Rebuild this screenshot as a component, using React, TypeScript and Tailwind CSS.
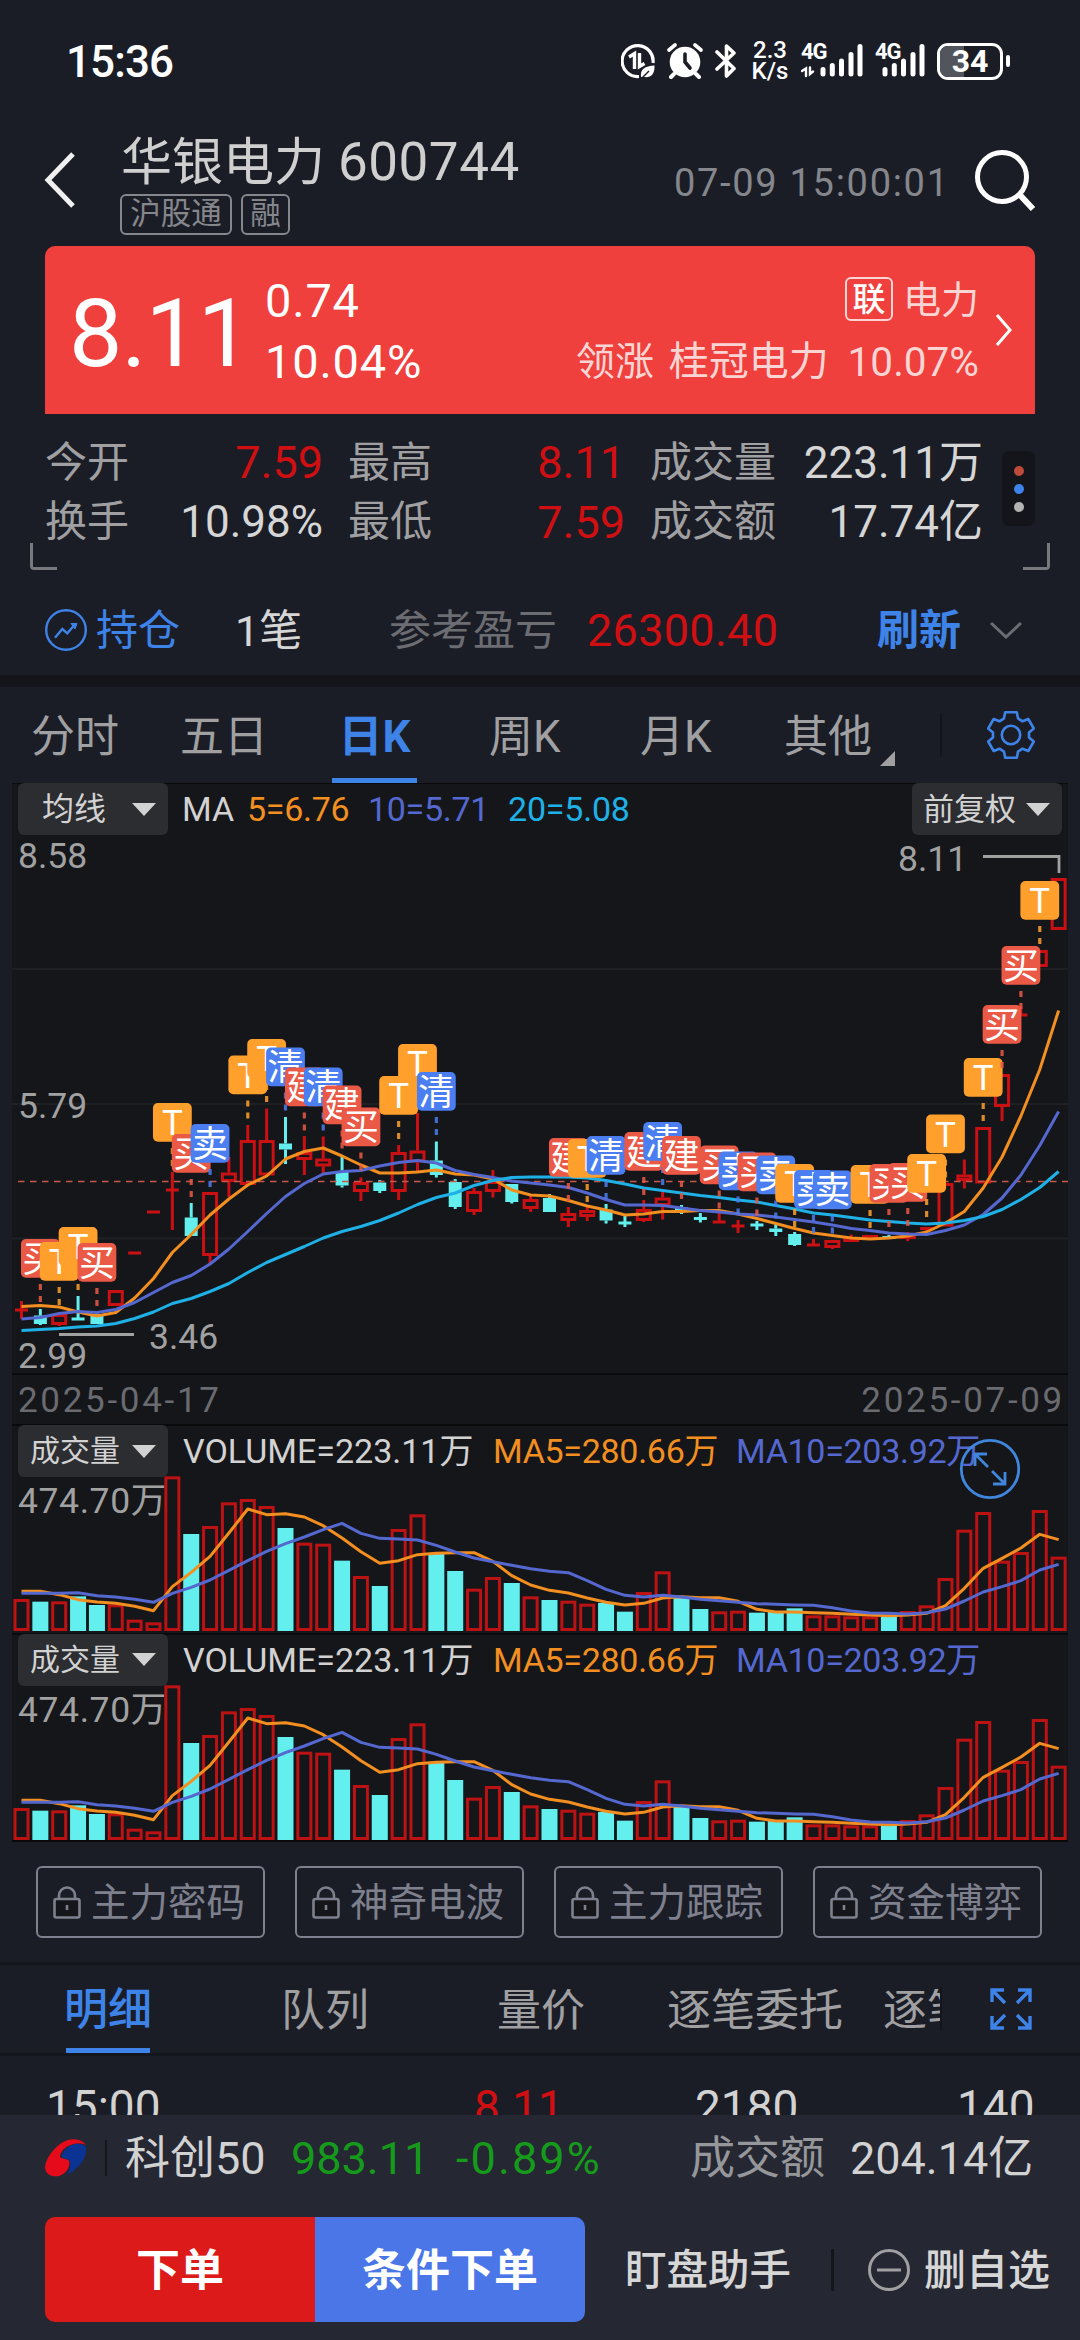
import React from 'react';
import { clsx } from 'clsx';

type Tone = 'up' | 'down';
// [high, bodyTop, bodyBottom, low, tone] in chart pixels
type Candle = [number, number, number, number, Tone];

const candles: Candle[] = [
  [467, 476, 476, 485, 'up'], [475, 481.5, 490, 491, 'down'], [480, 480, 491, 492, 'up'],
  [462, 485, 485, 486, 'down'], [479, 480.5, 490, 490, 'down'], [456, 456, 472, 472, 'up'],
  [419, 419, 419, 419, 'up'], [378, 378, 378, 378, 'up'], [338, 356, 356, 396, 'up'],
  [369, 383.5, 402, 402, 'down'], [358, 358, 422, 431, 'up'], [323, 338.5, 348, 363, 'up'],
  [291, 306, 351, 351, 'up'], [274.5, 306, 341.5, 341, 'up'], [283, 309.5, 315.5, 330, 'down'],
  [302, 318, 326, 341, 'up'], [302.5, 324.5, 332.5, 340, 'up'], [321, 338, 351.5, 353.5, 'down'],
  [343.5, 348, 358, 367, 'up'], [346, 348.5, 357, 359, 'down'], [311, 318, 358, 366, 'up'],
  [279, 316.5, 328.5, 337, 'up'], [307.5, 326.5, 341, 343.5, 'down'], [345, 348, 373, 375, 'down'],
  [354, 357, 378, 381, 'up'], [336, 347, 358, 363.5, 'up'], [350, 350, 368, 369.5, 'down'],
  [361, 365, 375, 378, 'up'], [360, 364, 378, 378, 'down'], [373, 379, 387, 393, 'up'],
  [372, 376, 383, 387, 'up'], [370, 375.5, 386.5, 389.5, 'down'], [381, 389, 389, 393, 'down'],
  [366, 375, 387, 388, 'up'], [357, 363.5, 372, 385.5, 'up'], [371, 375, 375, 380, 'down'],
  [379, 384.5, 384.5, 388.5, 'down'], [377, 388, 388, 389, 'up'], [386, 392, 392, 399, 'up'],
  [387, 391, 391, 396, 'down'], [390, 394.5, 398, 402, 'down'], [398, 400, 411, 412, 'down'],
  [405, 411, 411, 412, 'up'], [406, 406, 414, 415, 'up'], [400.5, 403, 408, 408, 'up'],
  [401, 401, 405, 405, 'up'], [401, 403.5, 403.5, 405, 'down'], [398, 401, 405, 407, 'up'],
  [393, 394.5, 394.5, 398, 'up'], [349, 349, 392.5, 392, 'up'], [325.5, 340.5, 347, 354.5, 'up'],
  [293, 293, 349.5, 349, 'up'], [240, 240, 273, 287, 'up'], [172, 181, 181, 181, 'up'],
  [116, 116, 133, 133, 'up'], [44, 44, 96, 96, 'up'],
];

const ma5 = [472.5, 471.5, 473, 478, 482, 478.5, 464, 444.5, 418.5, 400.5, 381, 365, 351, 342, 325, 317.5, 314, 322, 331, 339, 339, 338, 336, 340, 341, 345, 356, 361, 362, 366.5, 372, 376, 381, 380, 377.5, 377.5, 376.5, 376.5, 380, 384.5, 389.5, 394.5, 399, 401.5, 404, 405, 404, 402, 398, 389, 377.5, 354, 323, 282, 235.5, 176.5];
const ma10 = [485, 483.5, 479.5, 477.5, 478.5, 475.5, 468.5, 458.5, 448.5, 441.5, 430, 415, 397.5, 379.5, 362.5, 349.5, 340, 337.5, 336.5, 332, 328.5, 326.5, 329, 336.5, 340.5, 343.5, 347, 349, 351, 353.5, 359, 365.5, 371, 371, 371.5, 374, 376.5, 378, 380, 381, 383, 385.5, 388, 391, 394.5, 396.5, 399, 400, 400.5, 396.5, 391, 380.5, 364, 341, 311.5, 277.5];
const ma20 = [496.5, 495.5, 494.5, 493, 492, 489.5, 484.5, 478, 469.5, 464.5, 457.5, 449.5, 438.5, 428.5, 420.5, 412.5, 404, 397.5, 392.5, 386.5, 379, 370.5, 363.5, 359, 351.5, 346.5, 343.5, 343, 343, 343, 344, 346.5, 350, 354, 356.5, 359, 361.5, 363.5, 366, 368, 371.5, 375, 379, 381, 383.5, 386, 387.5, 389, 390, 389, 386.5, 382.5, 375.5, 365.5, 353.5, 337.5];

const volumes = [96, 88, 89, 104, 78, 80, 34, 26, 464, 291, 315, 386, 396, 375, 309, 265, 262, 211, 165, 135, 306, 350, 231, 180, 127, 162, 144, 104, 93, 91, 82, 84, 58, 117, 179, 99, 66, 59, 61, 55, 60, 68, 47, 47, 44, 44, 43, 60, 77, 159, 304, 357, 211, 237, 363, 223];
const volMa5 = [119, 119, 109, 94, 87, 83, 74, 61, 133, 176, 224, 294, 366, 349, 352, 342, 316, 279, 238, 203, 211, 229, 233, 235, 235, 209, 166, 138, 122, 114, 99, 86, 78, 83, 99, 103, 100, 100, 89, 65, 57, 57, 55, 53, 50, 48, 46, 48, 53, 76, 128, 188, 218, 249, 290, 274];
const volMa10 = [113, 113, 113, 115, 106, 102, 95, 86, 113, 131, 153, 182, 211, 239, 262, 282, 304, 323, 293, 278, 276, 273, 257, 237, 219, 208, 197, 187, 179, 175, 151, 125, 107, 102, 107, 102, 95, 91, 86, 82, 80, 78, 77, 70, 60, 54, 53, 51, 55, 66, 90, 117, 133, 151, 183, 200];

// [bar index, label, top]
const marks: [number, string, number][] = [
  [1, '买', 405], [2, 'T', 408], [3, 'T', 393], [4, '买', 409], [8, 'T', 269], [9, '买', 300],
  [10, '卖', 290], [12, 'T', 221.5], [13, 'T', 205], [14, '清', 213.5], [15, '建', 233.5],
  [16, '清', 233.5], [17, '建', 251.5], [18, '买', 273.5], [20, 'T', 242], [21, 'T', 210],
  [22, '清', 238], [29, '建', 304], [30, 'T', 305], [31, '清', 302], [33, '建', 298],
  [34, '清', 288], [35, '建', 302], [37, '买', 311.5], [38, '卖', 317.5], [39, '买', 318.5],
  [40, '卖', 321.5], [41, 'T', 330], [42, '卖', 336], [43, '卖', 336.5], [45, 'T', 331],
  [46, '买', 330], [47, '买', 329], [48, 'T', 320], [49, 'T', 280.5], [51, 'T', 224],
  [52, '买', 171], [53, '买', 112], [54, 'T', 47],
];

const markColor: Record<string, string> = {
  T: '#ffa02c',
  买: '#ea5945',
  建: '#ea5945',
  卖: '#4b7ef0',
  清: '#4b7ef0',
};

const RED = '#cb1013';
const TEAL = '#63efee';

const barX = (i: number) => 9.5 + i * 18.857;

const toPoints = (values: number[], y: (v: number) => number = v => v) =>
  values.map((v, i) => `${barX(i)},${y(v)}`).join(' ');

const CandleBar = ({ candle, i }: { candle: Candle; i: number }) => {
  const [high, top, bottom, low, tone] = candle;
  const x = barX(i);
  const color = tone === 'up' ? RED : TEAL;
  const doji = top === bottom;
  return (
    <g stroke={color} strokeWidth={3}>
      {high < top && <line x1={x} x2={x} y1={high} y2={top} />}
      {low > bottom && <line x1={x} x2={x} y1={bottom} y2={low} />}
      {doji && <line x1={x - 6.5} x2={x + 6.5} y1={top} y2={top} />}
      {!doji && tone === 'up' && (
        <rect x={x - 6.5} y={top + 1.5} width={13} height={Math.max(bottom - top - 3, 1)} fill="none" />
      )}
      {!doji && tone === 'down' && (
        <rect x={x - 6.5} y={top} width={13} height={bottom - top} fill={color} stroke="none" />
      )}
    </g>
  );
};

const TradeMark = ({ i, label, top }: { i: number; label: string; top: number }) => {
  const x = barX(i);
  const color = markColor[label];
  return (
    <g>
      <path d={`M${x} ${top + 45}v6M${x} ${top + 57}v6`} stroke={color} strokeWidth={3.2} opacity={0.85} />
      <rect x={x - 19.4} y={top} width={38.8} height={38.8} rx={5} fill={color} />
      <text
        x={x}
        y={label === 'T' ? top + 32 : top + 32.5}
        textAnchor="middle"
        fill="#fff"
        className={clsx(
          "font-['Roboto','Noto_Sans_CJK_SC',sans-serif]",
          label === 'T' ? 'text-[35px]' : 'text-[36px]'
        )}
      >
        {label}
      </text>
    </g>
  );
};

const KLineChart = () => (
  <svg width="1056" height="539" viewBox="0 0 1056 539" className="block overflow-visible">
    <g stroke="#1f2024" strokeWidth={2}>
      <line x1={0} x2={1056} y1={135} y2={135} />
      <line x1={0} x2={1056} y1={270} y2={270} />
      <line x1={0} x2={1056} y1={404.5} y2={404.5} />
    </g>
    <g fill="#a1a1a1" className="font-['Roboto',sans-serif] text-[35.5px]">
      <text x={6} y={34}>8.58</text>
      <text x={6} y={284}>5.79</text>
      <text x={6} y={534}>2.99</text>
      <text x={137} y={514.5}>3.46</text>
      <text x={886} y={37}>8.11</text>
    </g>
    <path d="M47 500.5h75M971 22.5h76V39" fill="none" stroke="#a1a1a1" strokeWidth={2.8} />
    {candles.map((c, i) => (
      <CandleBar key={i} candle={c} i={i} />
    ))}
    <line x1={6} x2={1056} y1={347.5} y2={347.5} stroke="#c6584e" strokeWidth={1.6} strokeDasharray="6.5 5.5" />
    <g fill="none" strokeWidth={3} strokeLinejoin="round">
      <polyline points={toPoints(ma5)} stroke="#f28f20" />
      <polyline points={toPoints(ma10)} stroke="#5468cf" />
      <polyline points={toPoints(ma20)} stroke="#1fb1e6" />
    </g>
    {marks.map(([i, label, top]) => (
      <TradeMark key={i} i={i} label={label} top={top} />
    ))}
  </svg>
);

const Caret = () => (
  <svg width="24" height="13" viewBox="0 0 24 13" className="shrink-0">
    <path d="M0 0h24L12 13z" fill="#d2d2d2" />
  </svg>
);

const Chip = ({ label, className }: { label: string; className: string }) => (
  <div className={clsx('flex h-[52px] w-[150px] shrink-0 items-center justify-between rounded-[6px] bg-[#2c2d31] leading-none text-[#d2d2d2]', className)}>
    <span className="whitespace-nowrap">{label}</span>
    <Caret />
  </div>
);

const VolumePanel = ({ expandable }: { expandable?: boolean }) => (
  <div className="relative h-[208.7px] shrink-0 border-t-2 border-[#0a0a0c]">
    <div className="flex h-[50px] items-center pl-[6px] text-[34px] leading-none whitespace-nowrap">
      <Chip label="成交量" className="pr-[12px] pl-[12px] text-[30px]" />
      <span className="ml-[15px] w-[310px] text-[#d2d2d2]">VOLUME=223.11万</span>
      <span className="w-[243px] tracking-[-0.3px] text-[#f28f20]">MA5=280.66万</span>
      <span className="tracking-[-0.3px] text-[#5468cf]">MA10=203.92万</span>
    </div>
    <svg width="1056" height="156" viewBox="0 0 1056 156" className="block overflow-visible">
      <text x={6} y={36.5} fill="#a1a1a1" className="font-['Roboto','Noto_Sans_CJK_SC',sans-serif] text-[35.5px] tracking-[0.6px]">
        474.70万
      </text>
      {volumes.map((v, i) => {
        const h = v / 3;
        return candles[i][4] === 'up' ? (
          <rect key={i} x={barX(i) - 6.5} y={156.5 - h} width={13} height={Math.max(h - 3, 2)} fill="none" stroke="#bd1214" strokeWidth={3} />
        ) : (
          <rect key={i} x={barX(i) - 8} y={155 - h} width={16} height={h} fill={TEAL} />
        );
      })}
      <g fill="none" strokeWidth={3} strokeLinejoin="round">
        <polyline points={toPoints(volMa5, v => 155 - v / 3)} stroke="#f28f20" />
        <polyline points={toPoints(volMa10, v => 155 - v / 3)} stroke="#5468cf" />
      </g>
    </svg>
    {expandable && (
      <svg width="62" height="62" viewBox="0 0 62 62" className="absolute top-[12px] left-[947px]" fill="none" stroke="#3f86dc" strokeWidth={2.8}>
        <circle cx={31} cy={31} r={28.7} />
        <path d="M29 29 16 16M16 28V16h12M33 33l13 13M46 34v12H34" />
      </svg>
    )}
  </div>
);

const StatusBar = () => (
  <div className="flex h-[122px] shrink-0 items-center pl-[66px] leading-none text-white">
    <span className="mt-[2px] w-[555px] text-[44px] font-medium tracking-[-0.9px]">15:36</span>
    <svg width="34" height="36" viewBox="0 0 34 36" fill="none" stroke="#fff" strokeWidth={3.2}>
      <path d="M18 33.5A15.5 15.5 0 1 1 32 20" />
      <path d="M8 14l5.5-3.5V26M18.5 10v13.5l5-3" strokeWidth={3.4} />
      <path d="M20 34c-1-8 4-11 13.5-11.5C34 31 30 35 23 34z" fill="#fff" stroke="none" />
      <path d="M21 35l7-7" stroke="#1b1d26" strokeWidth={1.4} />
    </svg>
    <svg width="36" height="36" viewBox="0 0 36 36" className="ml-[12px]" fill="none" stroke="#fff" strokeLinecap="round">
      <circle cx={18} cy={19} r={15.3} fill="#fff" stroke="none" />
      <path d="M2 7l6-5M34 7l-6-5" strokeWidth={3.6} />
      <path d="M7 31l-3 3M29 31l3 3" strokeWidth={4} />
      <path d="M18 11v8l5 6" stroke="#1b1d26" strokeWidth={3.6} />
    </svg>
    <svg width="22" height="36" viewBox="0 0 22 36" className="ml-[12px]" fill="none" stroke="#fff" strokeWidth={3.6} strokeLinejoin="round" strokeLinecap="round">
      <path d="M2 9l17 16.5L11.5 33V3L19 10 2 26" />
    </svg>
    <div className="ml-[15px] flex w-[36px] flex-col items-center text-[24px] leading-[21px] font-medium">
      <span>2.3</span>
      <span className="whitespace-nowrap">K/s</span>
    </div>
    <Signal arrows className="ml-[13px]" />
    <Signal className="ml-[12px]" />
    <div className="relative ml-[12px] flex h-[37px] w-[66px] items-center justify-center overflow-hidden rounded-[11px] border-3 border-white">
      <div className="absolute inset-y-0 left-0 w-[24px] bg-[#53555c]" />
      <span className="relative text-[32px] font-bold">34</span>
    </div>
    <div className="ml-[3px] h-[12px] w-[4px] rounded-full bg-white" />
  </div>
);

const Signal = ({ arrows, className }: { arrows?: boolean; className: string }) => (
  <div className={clsx('relative h-[36px]', arrows ? 'w-[62px]' : 'w-[50px]', className)}>
    <svg width={arrows ? 62 : 50} height="36" viewBox={arrows ? '0 0 62 36' : '12 0 50 36'} stroke="#fff" strokeWidth={5} strokeLinecap="round">
      <path d="M22 26.5v4.5M31.3 22.5V31M40.5 18V31M50 11.5V31M59 3.5V31" />
      {arrows && <path d="M1 28l4-2.5V33M9 24.5V31l3-2.5" fill="none" strokeWidth={2.4} />}
    </svg>
    <span className="absolute top-[-1px] left-0 text-[22px] leading-[20px] font-bold tracking-[-1px]">4G</span>
  </div>
);

const Header = () => (
  <div className="flex h-[124px] shrink-0 items-start leading-none whitespace-nowrap">
    <svg width="32" height="56" viewBox="0 0 32 56" className="mt-[30px] ml-[44px]" fill="none" stroke="#f0f0f0" strokeWidth={5}>
      <path d="M29 2 4 28l25 26" />
    </svg>
    <div className="ml-[45px] w-[553px]">
      <div className="mt-[14px] flex h-[52px] items-center text-[#cfcfcf]">
        <span className="w-[217px] text-[51px]">华银电力</span>
        <span className="text-[53px] tracking-[0.5px]">600744</span>
      </div>
      <div className="mt-[6px] -ml-[1px] flex gap-[9px] text-[30.5px] text-[#85878d]">
        <span className="flex h-[41px] w-[112px] items-center justify-center rounded-[6px] border-2 border-[#85878d]">沪股通</span>
        <span className="flex h-[41px] w-[49px] items-center justify-center rounded-[6px] border-2 border-[#85878d]">融</span>
      </div>
    </div>
    <span className="mt-[42px] w-[300px] text-[38px] tracking-[1.7px] text-[#85878d]">07-09 15:00:01</span>
    <svg width="62" height="62" viewBox="0 0 62 62" className="mt-[27px]" fill="none" stroke="#fff" strokeWidth={5}>
      <circle cx={28} cy={28} r={24.5} />
      <path d="M45 45l14 15" strokeWidth={6} />
    </svg>
  </div>
);

const PriceCard = () => (
  <div className="mx-[45px] flex h-[168px] shrink-0 items-start rounded-t-[10px] bg-[#ef403d] leading-none whitespace-nowrap text-white">
    <span className="mt-[40px] ml-[24px] w-[196px] text-[95px] tracking-[-1px]">8.11</span>
    <div className="mt-[31px] flex w-[170px] flex-col gap-[14px] text-[47px] tracking-[0.8px]">
      <span>0.74</span>
      <span>10.04%</span>
    </div>
    <div className="ml-[97px] flex w-[447px] flex-col items-end pl-[44px] text-[#fbd5d4]">
      <div className="mt-[31px] flex h-[44px] items-center text-[38px]">
        <span className="mr-[10px] flex h-[44px] w-[48px] items-center justify-center rounded-[6px] border-2 border-[#fbd5d4] text-[33px] font-medium text-white">联</span>
        <span className="mt-[2px]">电力</span>
      </div>
      <div className="mt-[20px] flex h-[42px] w-full items-center justify-between text-[39px]">
        <span>领涨</span>
        <span className="-ml-[4px] text-[40px]">桂冠电力</span>
        <span className="text-[40.5px]">10.07%</span>
      </div>
    </div>
    <svg width="18" height="34" viewBox="0 0 18 34" className="mt-[67px] ml-[16px]" fill="none" stroke="#fff" strokeWidth={3}>
      <path d="M2 2l13 15L2 32" />
    </svg>
  </div>
);

const stats = [
  [['今开', '7.59', true], ['最高', '8.11', true], ['成交量', '223.11万', false]],
  [['换手', '10.98%', false], ['最低', '7.59', true], ['成交额', '17.74亿', false]],
] as [string, string, boolean][][];

const Stats = () => (
  <div className="relative flex h-[156px] shrink-0 pt-[19px] pl-[45px] leading-none whitespace-nowrap">
    <div className="flex w-[939px] flex-col">
      {stats.map((row, r) => (
        <div key={r} className="grid h-[59.5px] grid-cols-[278px_277px_333px] items-center gap-x-[25px]">
          {row.map(([label, value, red]) => (
            <div key={label} className="flex items-center justify-between">
              <span className="text-[42px] text-[#a0a0a2]">{label}</span>
              <span className={clsx(red ? 'text-[45px] text-[#d00f12]' : 'text-[44px] text-[#d6d6d6]')}>{value}</span>
            </div>
          ))}
        </div>
      ))}
    </div>
    <div className="mt-[18px] ml-[18px] flex h-[75px] w-[33px] flex-col items-center justify-center gap-[8px] rounded-[7px] bg-[#14151a]">
      <div className="h-[10px] w-[10px] rounded-full bg-[#bd4a3a]" />
      <div className="h-[10px] w-[10px] rounded-full bg-[#3d83ea]" />
      <div className="h-[10px] w-[10px] rounded-full bg-[#b4b4b4]" />
    </div>
    <div className="absolute bottom-0 left-[30px] h-[27px] w-[27px] rounded-bl-[4px] border-b-3 border-l-3 border-[#77797e]" />
    <div className="absolute right-[30px] bottom-0 h-[27px] w-[27px] rounded-br-[4px] border-r-3 border-b-3 border-[#77797e]" />
  </div>
);

const Position = () => (
  <div className="flex h-[105px] shrink-0 items-center pt-[15px] pl-[45px] text-[42px] leading-none whitespace-nowrap">
    <svg width="42" height="42" viewBox="0 0 42 42" fill="none" stroke="#3d83e8" strokeWidth={2.4}>
      <circle cx={21} cy={21} r={19.8} />
      <path d="M10 28.7l7.3-8.7 5 4.3L29 16.5" />
      <path d="M26 14.5h6l-2 5.5z" fill="#3d83e8" strokeWidth={1} />
    </svg>
    <span className="mt-[2px] ml-[9px] w-[139px] text-[#3d83e8]">持仓</span>
    <span className="mt-[2px] w-[154px] text-[43px] text-[#d6d6d6]">1笔</span>
    <span className="mt-[2px] w-[198px] text-[#6c6d72]">参考盈亏</span>
    <span className="w-[290px] text-[45px] tracking-[0.3px] text-[#d00f12]">26300.40</span>
    <span className="mt-[2px] font-bold text-[#3d83e8]">刷新</span>
    <svg width="32" height="18" viewBox="0 0 32 18" className="ml-[29px]" fill="none" stroke="#6c6d72" strokeWidth={3}>
      <path d="M1 2l15 14L31 2" />
    </svg>
  </div>
);

const PeriodTabs = () => (
  <div className="flex h-[96px] shrink-0 items-center text-[44px] leading-none whitespace-nowrap text-[#a0a0a2]">
    <span className="mt-[3px] ml-[31px] w-[149px]">分时</span>
    <span className="mt-[3px] w-[152px]">五日</span>
    <div className="flex h-[96px] w-[85px] flex-col items-center border-b-5 border-[#3d83e8] pt-[28px] font-bold text-[#3d83e8]">
      <span>日K</span>
    </div>
    <span className="mt-[3px] ml-[72px] w-[151px]">周K</span>
    <span className="mt-[3px] w-[144px]">月K</span>
    <span className="mt-[3px]">其他</span>
    <svg width="15" height="15" viewBox="0 0 15 15" className="mt-[46px] ml-[8px]">
      <path d="M15 0v15H0z" fill="#a0a0a2" />
    </svg>
    <div className="ml-[45px] h-[44px] w-[2px] bg-[#14151a]" />
    <svg width="48" height="48" viewBox="0 0 48 48" className="ml-[45px]" fill="none" stroke="#3d83e8" strokeWidth={2.6} strokeLinejoin="round">
      <path d="M18.2 1.3h11.600l1.200 6 4.500 3 5.800-2.300 5.500 9.500-4.800 4v5l4.800 4-5.500 9.500-5.800-2.300-4.500 3-1.200 6H18.200l-1.200-6-4.500-3-5.800 2.300L1.200 30.500l4.800-4v-5l-4.800-4L6.700 8l5.800 2.300 4.500-3z" />
      <circle cx={24} cy={24} r={9.2} />
    </svg>
  </div>
);

const ChartPanel = () => (
  <div className="mx-[12px] flex h-[1059px] shrink-0 flex-col border-b-2 border-[#0a0a0c] bg-[#15161a]">
    <div className="flex h-[51px] shrink-0 items-center border-t border-[#0a0a0c] pl-[6px] text-[34px] leading-none whitespace-nowrap">
      <Chip label="均线" className="pr-[12px] pl-[24px] text-[32px]" />
      <span className="ml-[14px] w-[65px] text-[#d2d2d2]">MA</span>
      <span className="w-[121px] tracking-[-0.3px] text-[#f28f20]">5=6.76</span>
      <span className="w-[140px] tracking-[-0.3px] text-[#5468cf]">10=5.71</span>
      <span className="w-[404px] tracking-[-0.2px] text-[#1fb1e6]">20=5.08</span>
      <Chip label="前复权" className="pr-[12px] pl-[11px] text-[31px]" />
    </div>
    <div className="h-[539px] shrink-0">
      <KLineChart />
    </div>
    <div className="flex h-[51px] shrink-0 items-center justify-between border-t-2 border-[#0a0a0c] pt-[2px] pr-[3px] pl-[6px] text-[35px] leading-none tracking-[2.7px] text-[#6a6b70]">
      <span>2025-04-17</span>
      <span>2025-07-09</span>
    </div>
    <VolumePanel expandable />
    <VolumePanel />
  </div>
);

const LockIcon = () => (
  <svg width="28" height="33" viewBox="0 0 28 33" fill="none" stroke="#7e808d" strokeWidth={2.6}>
    <path d="M6 13V9.5a8 8 0 0 1 16 0V13" />
    <rect x={1.5} y={13} width={25} height={18.5} rx={2} fill="#15161a" />
    <path d="M14 19v5" />
  </svg>
);

const locked = ['主力密码', '神奇电波', '主力跟踪', '资金博弈'];

const LockedTools = () => (
  <div className="flex h-[120px] shrink-0 gap-[30px] pt-[24px] pl-[36px]">
    {locked.map(name => (
      <div key={name} className="flex h-[72px] w-[229px] items-center rounded-[6px] border-2 border-[#7e808d] pl-[15px] text-[38.5px] leading-none whitespace-nowrap text-[#7e808d]">
        <LockIcon />
        <span className="mt-[2px] ml-[10px]">{name}</span>
      </div>
    ))}
  </div>
);

const DetailTabs = () => (
  <div className="flex h-[94px] shrink-0 items-center border-y-3 border-[#14161d] text-[44px] leading-none whitespace-nowrap text-[#a0a0a2]">
    <div className="ml-[66px] flex h-[88px] w-[84px] justify-center self-end border-b-5 border-[#3d83e8] pt-[23px] font-medium text-[#3d83e8]">
      <span>明细</span>
    </div>
    <span className="mt-[3px] ml-[131px] w-[216px]">队列</span>
    <span className="mt-[3px] w-[170px]">量价</span>
    <span className="mt-[3px] w-[216px]">逐笔委托</span>
    <span className="mt-[3px] w-[57px] overflow-hidden">逐笔</span>
    <div className="h-[44px] w-[2px] bg-[#14151a]" />
    <svg width="42" height="42" viewBox="0 0 42 42" className="ml-[48px]" fill="none" stroke="#3d83e8" strokeWidth={3.4}>
      <path d="M2 14V2h12M2 2l13 13M28 2h12v12M40 2 27 15M2 28v12h12M2 40l13-13M28 40h12V28M40 40 27 27" />
    </svg>
  </div>
);

const BottomBar = () => (
  <div className="flex h-[225px] shrink-0 flex-col bg-[#252732] leading-none whitespace-nowrap">
    <div className="flex h-[84px] items-center pt-[2px] pl-[45px] text-[45px] text-[#d2d2d2]">
      <svg width="42" height="42" viewBox="0 0 42 42">
        <path d="M41 8C36 1 24 0 15 7C6 14 0 24 0 31C1 38 7 40 14 39C21 37 26 29 24 24C22 21 16 22 15 20C15 12 28 3 41 8z" fill="#e60b1a" />
        <path d="M41 10C36 4 26 7 21 12C16 17 16 20 18 21C24 22 26 24 25 28C25 32 24 35 22 38C32 33 41 22 41 14z" fill="#0b3394" />
      </svg>
      <div className="ml-[18px] h-[36px] w-[2px] bg-[#15161a]" />
      <span className="ml-[18px] w-[166px]">科创50</span>
      <span className="w-[165px] text-[#169a1c]">983.11</span>
      <span className="w-[234px] tracking-[2.1px] text-[#169a1c]">-0.89%</span>
      <span className="w-[160px] text-[#96979b]">成交额</span>
      <span>204.14亿</span>
    </div>
    <div className="mt-[18px] flex h-[105px] items-center pl-[45px] text-[44px] text-[#d6d6d6]">
      <div className="flex h-full w-[270px] items-center justify-center rounded-l-[10px] bg-[#dc1a1a] pt-[2px] font-bold text-white">下单</div>
      <div className="flex h-full w-[270px] items-center justify-center rounded-r-[10px] bg-[#4a76e8] pt-[2px] font-bold text-white">条件下单</div>
      <span className="mt-[2px] ml-[40px] w-[206px] text-[41.5px] font-medium">盯盘助手</span>
      <div className="h-[42px] w-[3px] bg-[#15161a]" />
      <svg width="42" height="42" viewBox="0 0 42 42" className="ml-[34px]" fill="none" stroke="#a0a0a2" strokeWidth={3}>
        <circle cx={21} cy={21} r={19.5} />
        <path d="M9 21h24" />
      </svg>
      <span className="mt-[2px] ml-[14px] text-[42px] font-medium">删自选</span>
    </div>
  </div>
);

export default function App() {
  return (
    <div className="flex h-[2340px] w-[1080px] flex-col overflow-hidden bg-[#1b1d26] font-['Roboto','Noto_Sans_CJK_SC',sans-serif]">
      <StatusBar />
      <Header />
      <PriceCard />
      <Stats />
      <Position />
      <div className="h-[12px] shrink-0 bg-[#14151a]" />
      <PeriodTabs />
      <ChartPanel />
      <LockedTools />
      <DetailTabs />
      <div className="flex h-[59px] shrink-0 overflow-hidden pt-[28px] pl-[46px] text-[46px] leading-none text-[#d2d2d2]">
        <span className="w-[428px]">15:00</span>
        <span className="w-[221px] text-[#d00f12]">8.11</span>
        <span className="w-[262px]">2180</span>
        <span>140</span>
      </div>
      <BottomBar />
    </div>
  );
}
